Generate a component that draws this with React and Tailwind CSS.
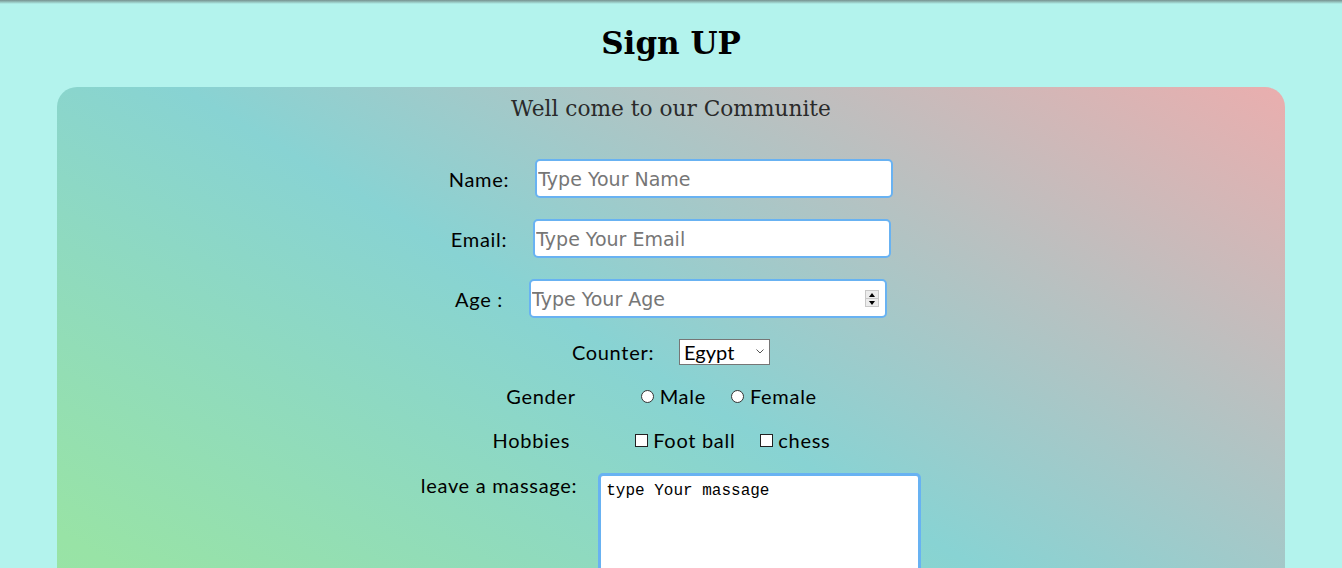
import React from "react";

const labelFont =
  "font-['Lato',sans-serif] text-[20px] leading-[24px] tracking-[0.7px] text-black";
const inputCls =
  "h-[39px] w-[358px] rounded-[5px] border-2 border-[#68b2f2] bg-white px-[1px] font-['DejaVu_Sans',sans-serif] text-[19px] text-black outline-none placeholder:text-[#767676]";

const Radio = ({ name }) => (
  <input
    type="radio"
    name={name}
    className="h-[13px] w-[13px] appearance-none rounded-full border border-[#333] bg-white"
  />
);

const Check = () => (
  <input
    type="checkbox"
    className="h-[13px] w-[13px] appearance-none border border-[#222] bg-white"
  />
);

export default function App() {
  return (
    <div className="min-h-screen bg-[#b3f3ed]">
      {/* top shadow line */}
      <div className="h-[4px] bg-linear-to-b from-[#76918f] to-[#b3f3ed]" />

      <h1 className="pt-[19px] pb-[24px] text-center font-['DejaVu_Serif',serif] text-[31px] leading-[40px] font-bold text-black">
        Sign UP
      </h1>

      <div className="mx-[57px] h-[740px] rounded-[20px] bg-[linear-gradient(to_top_right,#9de5a2_0%,#98e3a6_20%,#88d3d3_55%,#eaaeae_100%)]">
        <p className="pt-[7px] text-center font-['DejaVu_Serif',serif] text-[21.7px] leading-[30px] text-[#2a2a2a]">
          Well come to our Communite
        </p>

        <form className="mt-[35px] flex flex-col items-center">
          {/* Name */}
          <div className="flex items-center justify-center gap-[26px]">
            <label className={labelFont}>Name:</label>
            <input className={inputCls} placeholder="Type Your Name" />
          </div>

          {/* Email */}
          <div className="mt-[21px] flex items-center justify-center gap-[26px]">
            <label className={labelFont}>Email:</label>
            <input type="email" className={inputCls} placeholder="Type Your Email" />
          </div>

          {/* Age */}
          <div className="mt-[21px] flex items-center justify-center gap-[26px]">
            <label className={labelFont}>Age :</label>
            <div className="relative">
              <input
                type="number"
                className={`${inputCls} [appearance:textfield] [&::-webkit-inner-spin-button]:appearance-none [&::-webkit-outer-spin-button]:appearance-none`}
                placeholder="Type Your Age"
              />
              <div className="absolute top-[11px] right-[8px] flex h-[17px] w-[14px] flex-col border border-[#c8c8c8] bg-[#ececec]">
                <div className="flex flex-1 items-center justify-center border-b border-[#c8c8c8]">
                  <div className="h-0 w-0 border-x-[3.5px] border-b-[4px] border-x-transparent border-b-black" />
                </div>
                <div className="flex flex-1 items-center justify-center">
                  <div className="h-0 w-0 border-x-[3.5px] border-t-[4px] border-x-transparent border-t-black" />
                </div>
              </div>
            </div>
          </div>

          {/* Country */}
          <div className="mt-[21px] flex h-[26px] items-center justify-center gap-[25px]">
            <label className={labelFont}>Counter:</label>
            <div className="relative">
              <select className="h-[26px] w-[91px] appearance-none border border-[#767676] bg-white pl-[4px] font-['Lato',sans-serif] text-[20px] leading-[22px] text-black outline-none">
                <option>Egypt</option>
                <option>Saudi Arabia</option>
                <option>Jordan</option>
              </select>
              <svg
                className="pointer-events-none absolute top-[10px] right-[6px]"
                width="8"
                height="5"
                viewBox="0 0 8 5"
                fill="none"
              >
                <path d="M0.5 0.5 L4 4 L7.5 0.5" stroke="#555" strokeWidth="1" />
              </svg>
            </div>
          </div>

          {/* Gender */}
          <div className="mt-[19px] flex h-[24px] items-center justify-center pr-[19px]">
            <span className={labelFont}>Gender</span>
            <label className="ml-[65px] flex items-center gap-[6px]">
              <Radio name="gender" />
              <span className={labelFont}>Male</span>
            </label>
            <label className="ml-[25px] flex items-center gap-[6px]">
              <Radio name="gender" />
              <span className={labelFont}>Female</span>
            </label>
          </div>

          {/* Hobbies */}
          <div className="mt-[20px] flex h-[24px] items-center justify-center pr-[19px]">
            <span className={labelFont}>Hobbies</span>
            <label className="ml-[65px] flex items-center gap-[5px]">
              <Check />
              <span className={labelFont}>Foot ball</span>
            </label>
            <label className="ml-[25px] flex items-center gap-[5px]">
              <Check />
              <span className={labelFont}>chess</span>
            </label>
          </div>

          {/* Message */}
          <div className="mt-[21px] flex items-start justify-center gap-[21px]">
            <label className={`${labelFont} leading-[22px]`}>leave a massage:</label>
            <textarea
              className="h-[180px] w-[323px] resize-none rounded-[5px] border-[3px] border-[#68b2f2] bg-white px-[5px] pt-[5px] font-['Liberation_Mono',monospace] text-[16px] leading-[20px] text-black outline-none"
              defaultValue="type Your massage"
            />
          </div>
        </form>
      </div>
    </div>
  );
}
